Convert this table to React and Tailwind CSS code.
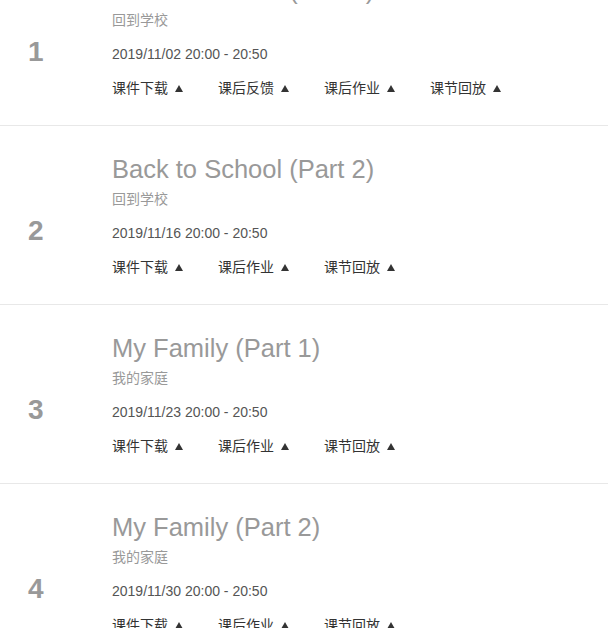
import React from "react";

const items = [
  { n: 1, title: "Back to School (Part 1)", sub: "回到学校", date: "2019/11/02 20:00 - 20:50", links: ["课件下载", "课后反馈", "课后作业", "课节回放"] },
  { n: 2, title: "Back to School (Part 2)", sub: "回到学校", date: "2019/11/16 20:00 - 20:50", links: ["课件下载", "课后作业", "课节回放"] },
  { n: 3, title: "My Family (Part 1)", sub: "我的家庭", date: "2019/11/23 20:00 - 20:50", links: ["课件下载", "课后作业", "课节回放"] },
  { n: 4, title: "My Family (Part 2)", sub: "我的家庭", date: "2019/11/30 20:00 - 20:50", links: ["课件下载", "课后作业", "课节回放"] },
];

export default function App() {
  return (
    <div className="w-[608px] h-[628px] overflow-hidden bg-white" style={{ fontFamily: '"Liberation Sans", Arial, "Noto Sans CJK SC", sans-serif' }}>
      <div className="-mt-[53px]">
        {items.map((it) => (
          <div key={it.n} className="flex h-[179px] border-b border-[#e8e8e8]">
            <div className="w-[112px] shrink-0 pl-[28px] pt-[91px]">
              <div className="text-[28px] leading-[28px] font-bold text-[#999]">{it.n}</div>
            </div>
            <div className="flex flex-col pt-[28px]">
              <div className="text-[25.5px] leading-[30px] text-[#999] whitespace-nowrap">{it.title}</div>
              <div className="mt-[5px] text-[14px] leading-[20px] text-[#999]">{it.sub}</div>
              <div className="mt-[14px] text-[14px] leading-[20px] text-[#555]">{it.date}</div>
              <div className="mt-[14px] flex">
                {it.links.map((l) => (
                  <div key={l} className="w-[106px] flex items-center text-[14px] leading-[20px] text-[#333]">
                    <span>{l}</span>
                    <span className="ml-[7px] mt-[1px] w-0 h-0 border-l-[4px] border-r-[4px] border-b-[7px] border-l-transparent border-r-transparent border-b-[#333]" />
                  </div>
                ))}
              </div>
            </div>
          </div>
        ))}
      </div>
    </div>
  );
}
